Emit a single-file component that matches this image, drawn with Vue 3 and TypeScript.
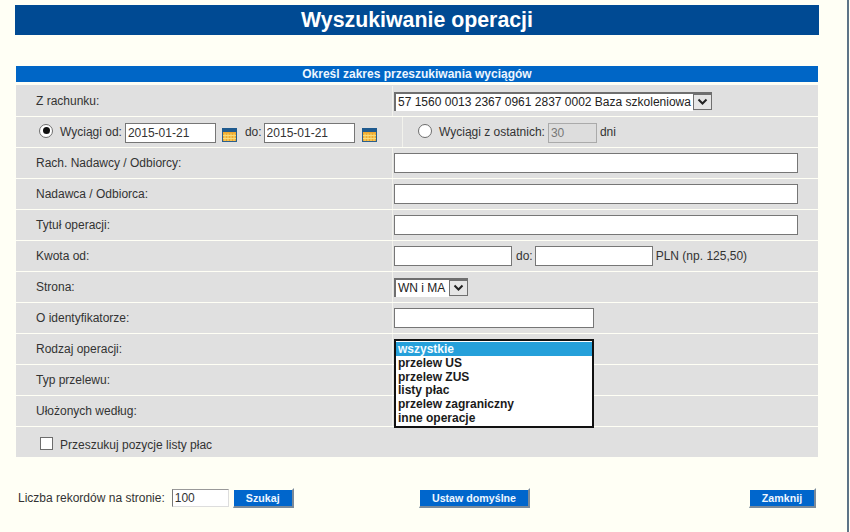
<script setup lang="ts">
const textRows = [
  { label: 'Rach. Nadawcy / Odbiorcy:' },
  { label: 'Nadawca / Odbiorca:' },
  { label: 'Tytuł operacji:' },
]
const listOptions = ['wszystkie', 'przelew US', 'przelew ZUS', 'listy płac', 'przelew zagraniczny', 'inne operacje']
</script>

<template>
  <div class="page">
    <h1 class="banner">Wyszukiwanie operacji</h1>
    <h2 class="section">Określ zakres przeszukiwania wyciągów</h2>
    <div class="rows">
      <div class="row">
        <div class="label">Z rachunku:</div>
        <div class="value">
          <div class="select account"><span class="sel-text">57 1560 0013 2367 0961 2837 0002 Baza szkoleniowa</span><span class="arrow"><svg width="11" height="7" viewBox="0 0 11 7"><path d="M1.5 1.5 5.5 5.5 9.5 1.5" fill="none" stroke="#222" stroke-width="2"/></svg></span></div>
        </div>
      </div>
      <div class="row dates">
        <div class="date-left">
          <span class="radio on"></span>
          <span class="t-a">Wyciągi od:</span>
          <input class="input date" value="2015-01-21" />
          <svg class="cal" width="15" height="14" viewBox="0 0 15 14"><rect x="0.5" y="0.5" width="14" height="13" fill="#f0a92e" stroke="#2c5f8d"/><rect x="0" y="0" width="15" height="4" fill="#1f5a8e"/><path d="M3 5.5V13M6 5.5V13M9 5.5V13M12 5.5V13M1 7.5h13M1 10.5h13" stroke="#f7dc7a" stroke-width="1"/></svg>
          <span class="t-b">do:</span>
          <input class="input date" value="2015-01-21" />
          <svg class="cal cal-end" width="15" height="14" viewBox="0 0 15 14"><rect x="0.5" y="0.5" width="14" height="13" fill="#f0a92e" stroke="#2c5f8d"/><rect x="0" y="0" width="15" height="4" fill="#1f5a8e"/><path d="M3 5.5V13M6 5.5V13M9 5.5V13M12 5.5V13M1 7.5h13M1 10.5h13" stroke="#f7dc7a" stroke-width="1"/></svg>
        </div>
        <div class="date-right">
          <span class="radio"></span>
          <span class="t-a">Wyciągi z ostatnich:</span>
          <input class="input last" value="30" disabled />
          <span class="t-c">dni</span>
        </div>
      </div>
      <div v-for="r in textRows" :key="r.label" class="row">
        <div class="label">{{ r.label }}</div>
        <div class="value"><input class="input wide" /></div>
      </div>
      <div class="row">
        <div class="label">Kwota od:</div>
        <div class="value">
          <input class="input amount" />
          <span class="amount-do">do:</span>
          <input class="input amount" />
          <span class="amount-pln">PLN (np. 125,50)</span>
        </div>
      </div>
      <div class="row">
        <div class="label">Strona:</div>
        <div class="value">
          <div class="select side"><span class="sel-text">WN i MA</span><span class="arrow"><svg width="11" height="7" viewBox="0 0 11 7"><path d="M1.5 1.5 5.5 5.5 9.5 1.5" fill="none" stroke="#222" stroke-width="2"/></svg></span></div>
        </div>
      </div>
      <div class="row">
        <div class="label">O identyfikatorze:</div>
        <div class="value"><input class="input ident" /></div>
      </div>
      <div class="row">
        <div class="label">Rodzaj operacji:</div>
        <div class="value listhost">
          <ul class="listbox">
            <li v-for="(o, i) in listOptions" :key="o" :class="{ selected: i === 0 }">{{ o }}</li>
          </ul>
        </div>
      </div>
      <div class="row">
        <div class="label">Typ przelewu:</div>
        <div class="value"></div>
      </div>
      <div class="row">
        <div class="label">Ułożonych według:</div>
        <div class="value"></div>
      </div>
      <div class="row last-row">
        <span class="checkbox"></span>
        <span class="check-label">Przeszukuj pozycje listy płac</span>
      </div>
    </div>
    <div class="footer">
      <div class="records">
        <span>Liczba rekordów na stronie:</span>
        <input class="input count" value="100" />
        <button class="btn b-search" type="button">Szukaj</button>
      </div>
      <button class="btn b-default" type="button">Ustaw domyślne</button>
      <button class="btn b-close" type="button">Zamknij</button>
    </div>
    <div class="edge"></div>
  </div>
</template>

<style>
html, body { margin: 0; background: #fffff5; }
</style>

<style scoped>
.page {
  position: relative;
  width: 850px;
  height: 532px;
  overflow: hidden;
  background: #fffff5;
  font-family: "Liberation Sans", Arial, sans-serif;
  font-size: 12px;
  color: #333;
  padding-top: 5px;
  box-sizing: border-box;
}
.banner {
  margin: 0 0 0 15px;
  width: 804px;
  height: 30px;
  line-height: 30px;
  background: #004a93;
  color: #fff;
  font-size: 21.33px;
  font-weight: bold;
  text-align: center;
}
.section {
  margin: 31px 0 0 16px;
  width: 802px;
  height: 16px;
  line-height: 16px;
  background: #0066c6;
  color: #eef6ff;
  font-size: 12px;
  font-weight: bold;
  text-align: center;
}
.rows {
  margin: 3px 0 0 16px;
  width: 802px;
  display: flex;
  flex-direction: column;
  gap: 1px;
  border-top: 1px solid #e0e0e0;
}
.row {
  display: flex;
  align-items: center;
  height: 30px;
  background: #e0e0e0;
}
.label {
  width: 356px;
  padding-left: 20px;
  flex: none;
}
.value {
  flex: 1;
  align-self: stretch;
  display: flex;
  align-items: center;
  border-left: 1px solid #f2f2ec;
  padding-left: 1px;
}
.input {
  box-sizing: border-box;
  height: 20px;
  margin: 0;
  padding: 0 2px;
  border: 1px solid #767676;
  background: #fff;
  font: 12px "Liberation Sans", Arial, sans-serif;
  color: #333;
  outline: none;
}
.wide { width: 404px; }
.ident { width: 200px; }
.amount { width: 118px; }
.amount-do { margin: 0 2px 0 4px; }
.amount-pln { margin-left: 3px; }
.select {
  box-sizing: border-box;
  height: 19px;
  display: flex;
  align-items: flex-start;
  border-top: 2px solid #6f6f6f;
  border-left: 2px solid #6f6f6f;
  color: #222;
}
.account { width: 318px; }
.side { width: 74px; }
.sel-text {
  flex: 1;
  height: 17px;
  line-height: 17px;
  background: #fff;
  padding-left: 2px;
  white-space: nowrap;
  overflow: hidden;
}
.arrow {
  box-sizing: border-box;
  width: 19px;
  height: 16px;
  flex: none;
  display: flex;
  align-items: center;
  justify-content: center;
  border: 1px solid #707070;
  background: #e6e6e6;
}
.dates { align-items: stretch; }
.date-left {
  width: 386px;
  flex: none;
  display: flex;
  align-items: center;
  padding-left: 23px;
  box-sizing: border-box;
}
.date-right {
  flex: 1;
  display: flex;
  align-items: center;
  border-left: 1px solid #f2f2ec;
  padding-left: 15px;
}
.radio {
  box-sizing: border-box;
  width: 14px;
  height: 14px;
  border: 1px solid #6d6d6d;
  border-radius: 50%;
  background: #fff;
  flex: none;
  margin-top: -3px;
  position: relative;
}
.radio.on::after {
  content: "";
  position: absolute;
  left: 2.5px;
  top: 2.5px;
  width: 7px;
  height: 7px;
  border-radius: 50%;
  background: #111;
}
.t-a { margin: 0 3px 0 7px; }
.t-b { margin: 0 2px 0 8px; }
.t-c { margin-left: 3px; }
.date { width: 91px; margin-top: 2px; }
.cal { margin-left: 6px; margin-top: 6px; flex: none; }
.cal-end { margin-left: 7px; }
.last { width: 49px; margin-top: 2px; background: #ddd; border-color: #aaa; color: #777; }
.listhost { position: relative; }
.listbox {
  position: absolute;
  left: 1px;
  top: 5px;
  width: 200px;
  height: 89px;
  box-sizing: border-box;
  margin: 0;
  padding: 1px 0 0;
  list-style: none;
  border: 2px solid #111;
  background: #fff;
  font-weight: bold;
  color: #1a1a1a;
  z-index: 2;
}
.listbox li {
  height: 13.8px;
  line-height: 14px;
  padding-left: 2px;
  white-space: nowrap;
}
.listbox li.selected { background: #26a0da; color: #f4fbff; }
.last-row { box-sizing: border-box; padding: 5px 0 0 24px; }
.checkbox {
  box-sizing: border-box;
  width: 13px;
  height: 13px;
  border: 1px solid #6d6d6d;
  background: #fff;
  margin-top: -3px;
}
.check-label { margin-left: 7px; }
.footer {
  margin: 31px 0 0 18px;
  display: flex;
  align-items: center;
  height: 20px;
}
.records { display: flex; align-items: center; width: 401px; flex: none; }
.count { width: 57px; height: 18px; margin-left: 7px; border-color: #999 #ddd #ddd #777; }
.btn {
  box-sizing: border-box;
  height: 20px;
  padding: 0;
  border-style: solid;
  border-width: 2px 2px 2px 1px;
  border-color: transparent #7a8a9a #7a8a9a transparent;
  background: #0066cc;
  background-clip: padding-box;
  color: #eef6ff;
  font: bold 10.67px "Liberation Sans", Arial, sans-serif;
  flex: none;
}
.b-search { width: 61px; margin-left: 4px; }
.b-default { width: 111px; }
.b-close { width: 67px; margin-left: 219px; }
.edge {
  position: absolute;
  right: 1px;
  top: 0;
  bottom: 0;
  width: 2px;
  background: #5d7487;
}
</style>
